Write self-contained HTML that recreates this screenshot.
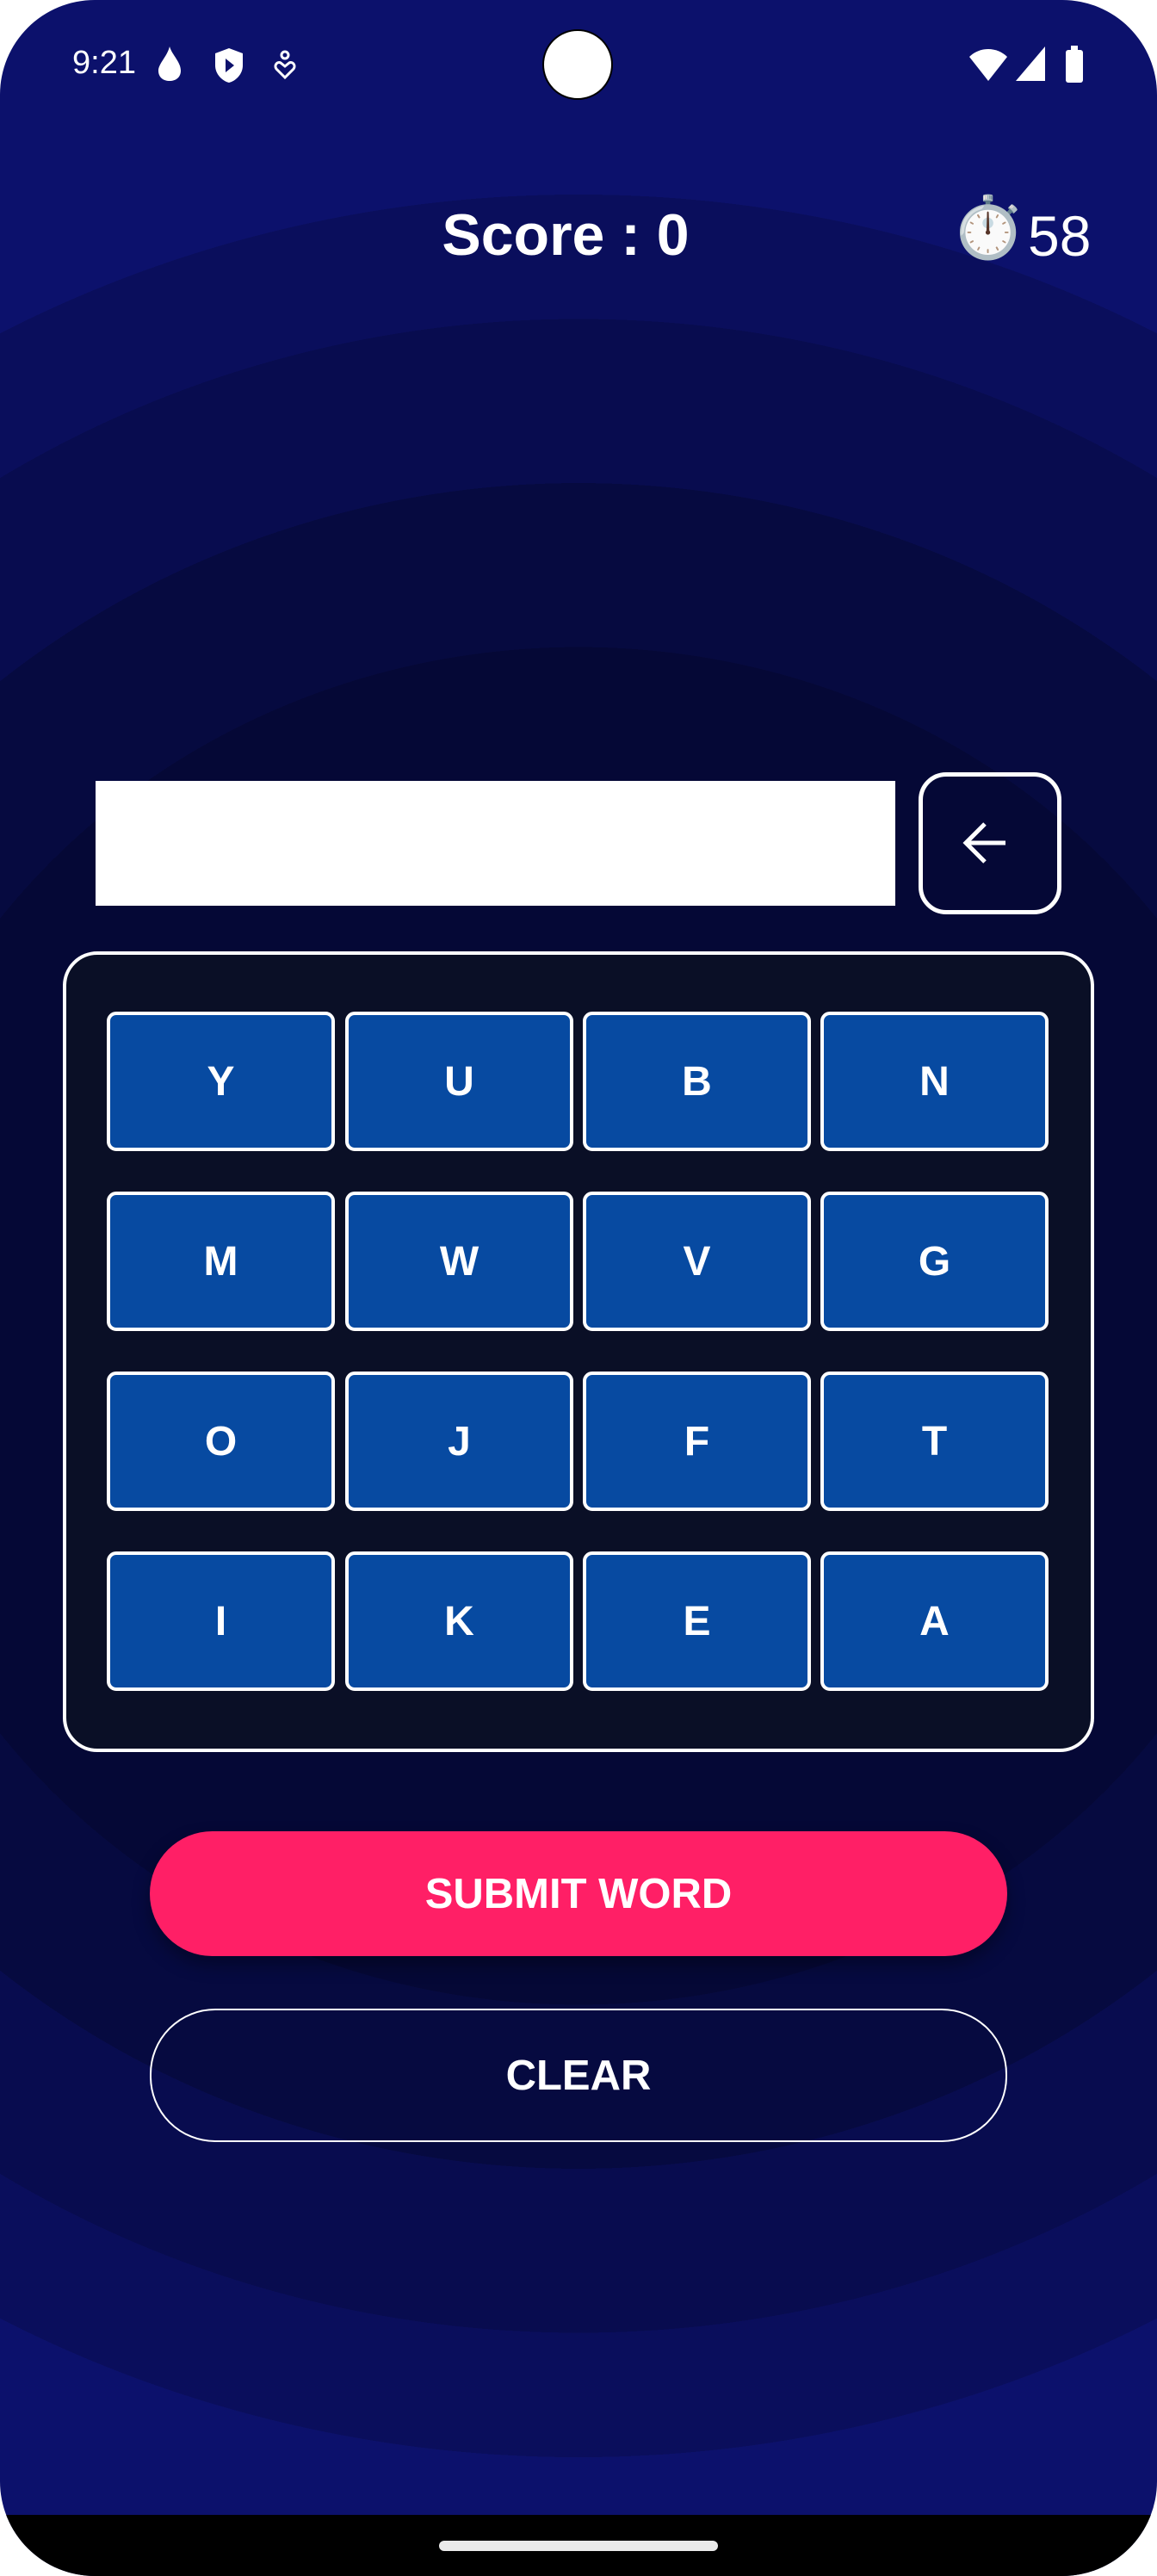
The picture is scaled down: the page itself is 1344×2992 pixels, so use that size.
<!DOCTYPE html>
<html><head><meta charset="utf-8"><style>
html,body{margin:0;padding:0;background:#fff}
body{width:1344px;height:2992px;position:relative;overflow:hidden;font-family:"Liberation Sans",sans-serif}
.screen{position:absolute;left:0;top:0;width:1344px;height:2992px;border-radius:110px;overflow:hidden;
background:radial-gradient(ellipse 1400px 1314px at 672px 1540px,#050836 0%,#050836 60%,#060a40 60%,#060a40 74.5%,#080c4f 74.5%,#080c4f 89%,#0a0e5c 89%,#0a0e5c 100%,#0c116c 100%)}
.t{position:absolute;color:#fff;white-space:nowrap}
.key{position:absolute;width:257px;height:154px;border:4px solid #fff;border-radius:11px;background:#074aa1;color:#fff;font-size:48px;font-weight:bold;display:flex;align-items:center;justify-content:center}
</style></head><body><div class="screen">
<div class="t" style="left:84px;top:52px;font-size:38px">9:21</div>
<svg style="position:absolute;left:182px;top:52px" width="30" height="44" viewBox="0 0 30 44"><path d="M15 2 C18 12 28 20 28 30 C28 38 22 42 15 42 C8 42 2 38 2 30 C2 22 12 14 15 2Z" fill="#fff"/></svg>
<svg style="position:absolute;left:246px;top:54px" width="40" height="44" viewBox="0 0 40 44"><path d="M20 2 L36 8 V22 C36 32 28 40 20 42 C12 40 4 32 4 22 V8Z" fill="#fff"/><path d="M16 14 L26 22 L16 30Z" fill="#0c116c"/></svg>
<svg style="position:absolute;left:316px;top:58px" width="30" height="36" viewBox="0 0 30 36"><circle cx="15" cy="6" r="4" fill="none" stroke="#fff" stroke-width="3"/><path d="M15 32 L5 22 C2 18 6 13 10 15 L15 19 L20 15 C24 13 28 18 25 22Z" fill="none" stroke="#fff" stroke-width="3"/></svg>
<div style="position:absolute;left:630px;top:34px;width:82px;height:82px;border-radius:50%;background:#fff;border:2px solid #000;box-sizing:border-box"></div>
<svg style="position:absolute;left:1124px;top:52px" width="140" height="46" viewBox="0 0 140 46"><path d="M2 14 C14 2 34 2 46 14 L24 42Z" fill="#fff"/><path d="M90 2 V42 H56Z" fill="#fff"/><rect x="114" y="6" width="20" height="38" rx="3" fill="#fff"/><rect x="120" y="1" width="8" height="6" fill="#fff"/></svg>
<div class="t" style="left:0;width:1314px;text-align:center;top:234px;font-size:68px;font-weight:bold">Score : 0</div>
<div class="t" style="left:1104px;top:224px;font-size:70px;font-family:'Noto Color Emoji','DejaVu Sans',sans-serif">⏱️</div>
<div class="t" style="left:1194px;top:236px;font-size:66px">58</div>
<div style="position:absolute;left:111px;top:907px;width:929px;height:145px;background:#fff"></div>
<div style="position:absolute;left:1067px;top:897px;width:156px;height:155px;border:5px solid #fff;border-radius:32px"></div>
<svg style="position:absolute;left:1110px;top:950px" width="70" height="60" viewBox="0 0 70 60"><path d="M58 29 H12 M34 7 L12 29 L34 51" fill="none" stroke="#fff" stroke-width="5"/></svg>
<div style="position:absolute;left:73px;top:1105px;width:1190px;height:922px;border:4px solid #fff;border-radius:40px;background:#0a0f26"></div>
<div class="key" style="left:124px;top:1175px">Y</div><div class="key" style="left:401px;top:1175px">U</div><div class="key" style="left:677px;top:1175px">B</div><div class="key" style="left:953px;top:1175px">N</div>
<div class="key" style="left:124px;top:1384px">M</div><div class="key" style="left:401px;top:1384px">W</div><div class="key" style="left:677px;top:1384px">V</div><div class="key" style="left:953px;top:1384px">G</div>
<div class="key" style="left:124px;top:1593px">O</div><div class="key" style="left:401px;top:1593px">J</div><div class="key" style="left:677px;top:1593px">F</div><div class="key" style="left:953px;top:1593px">T</div>
<div class="key" style="left:124px;top:1802px">I</div><div class="key" style="left:401px;top:1802px">K</div><div class="key" style="left:677px;top:1802px">E</div><div class="key" style="left:953px;top:1802px">A</div>
<div style="position:absolute;left:174px;top:2127px;width:996px;height:145px;border-radius:73px;background:#ff1f66;color:#fff;font-size:49px;font-weight:bold;display:flex;align-items:center;justify-content:center;box-shadow:0 10px 20px rgba(0,0,0,.35)">SUBMIT WORD</div>
<div style="position:absolute;left:174px;top:2333px;width:992px;height:151px;border-radius:76px;border:2px solid #fff;color:#fff;font-size:49px;font-weight:bold;display:flex;align-items:center;justify-content:center">CLEAR</div>
<div style="position:absolute;left:0;top:2921px;width:1344px;height:71px;background:#000"></div>
<div style="position:absolute;left:510px;top:2951px;width:324px;height:12px;border-radius:6px;background:#eaeaea"></div>
</div></body></html>
